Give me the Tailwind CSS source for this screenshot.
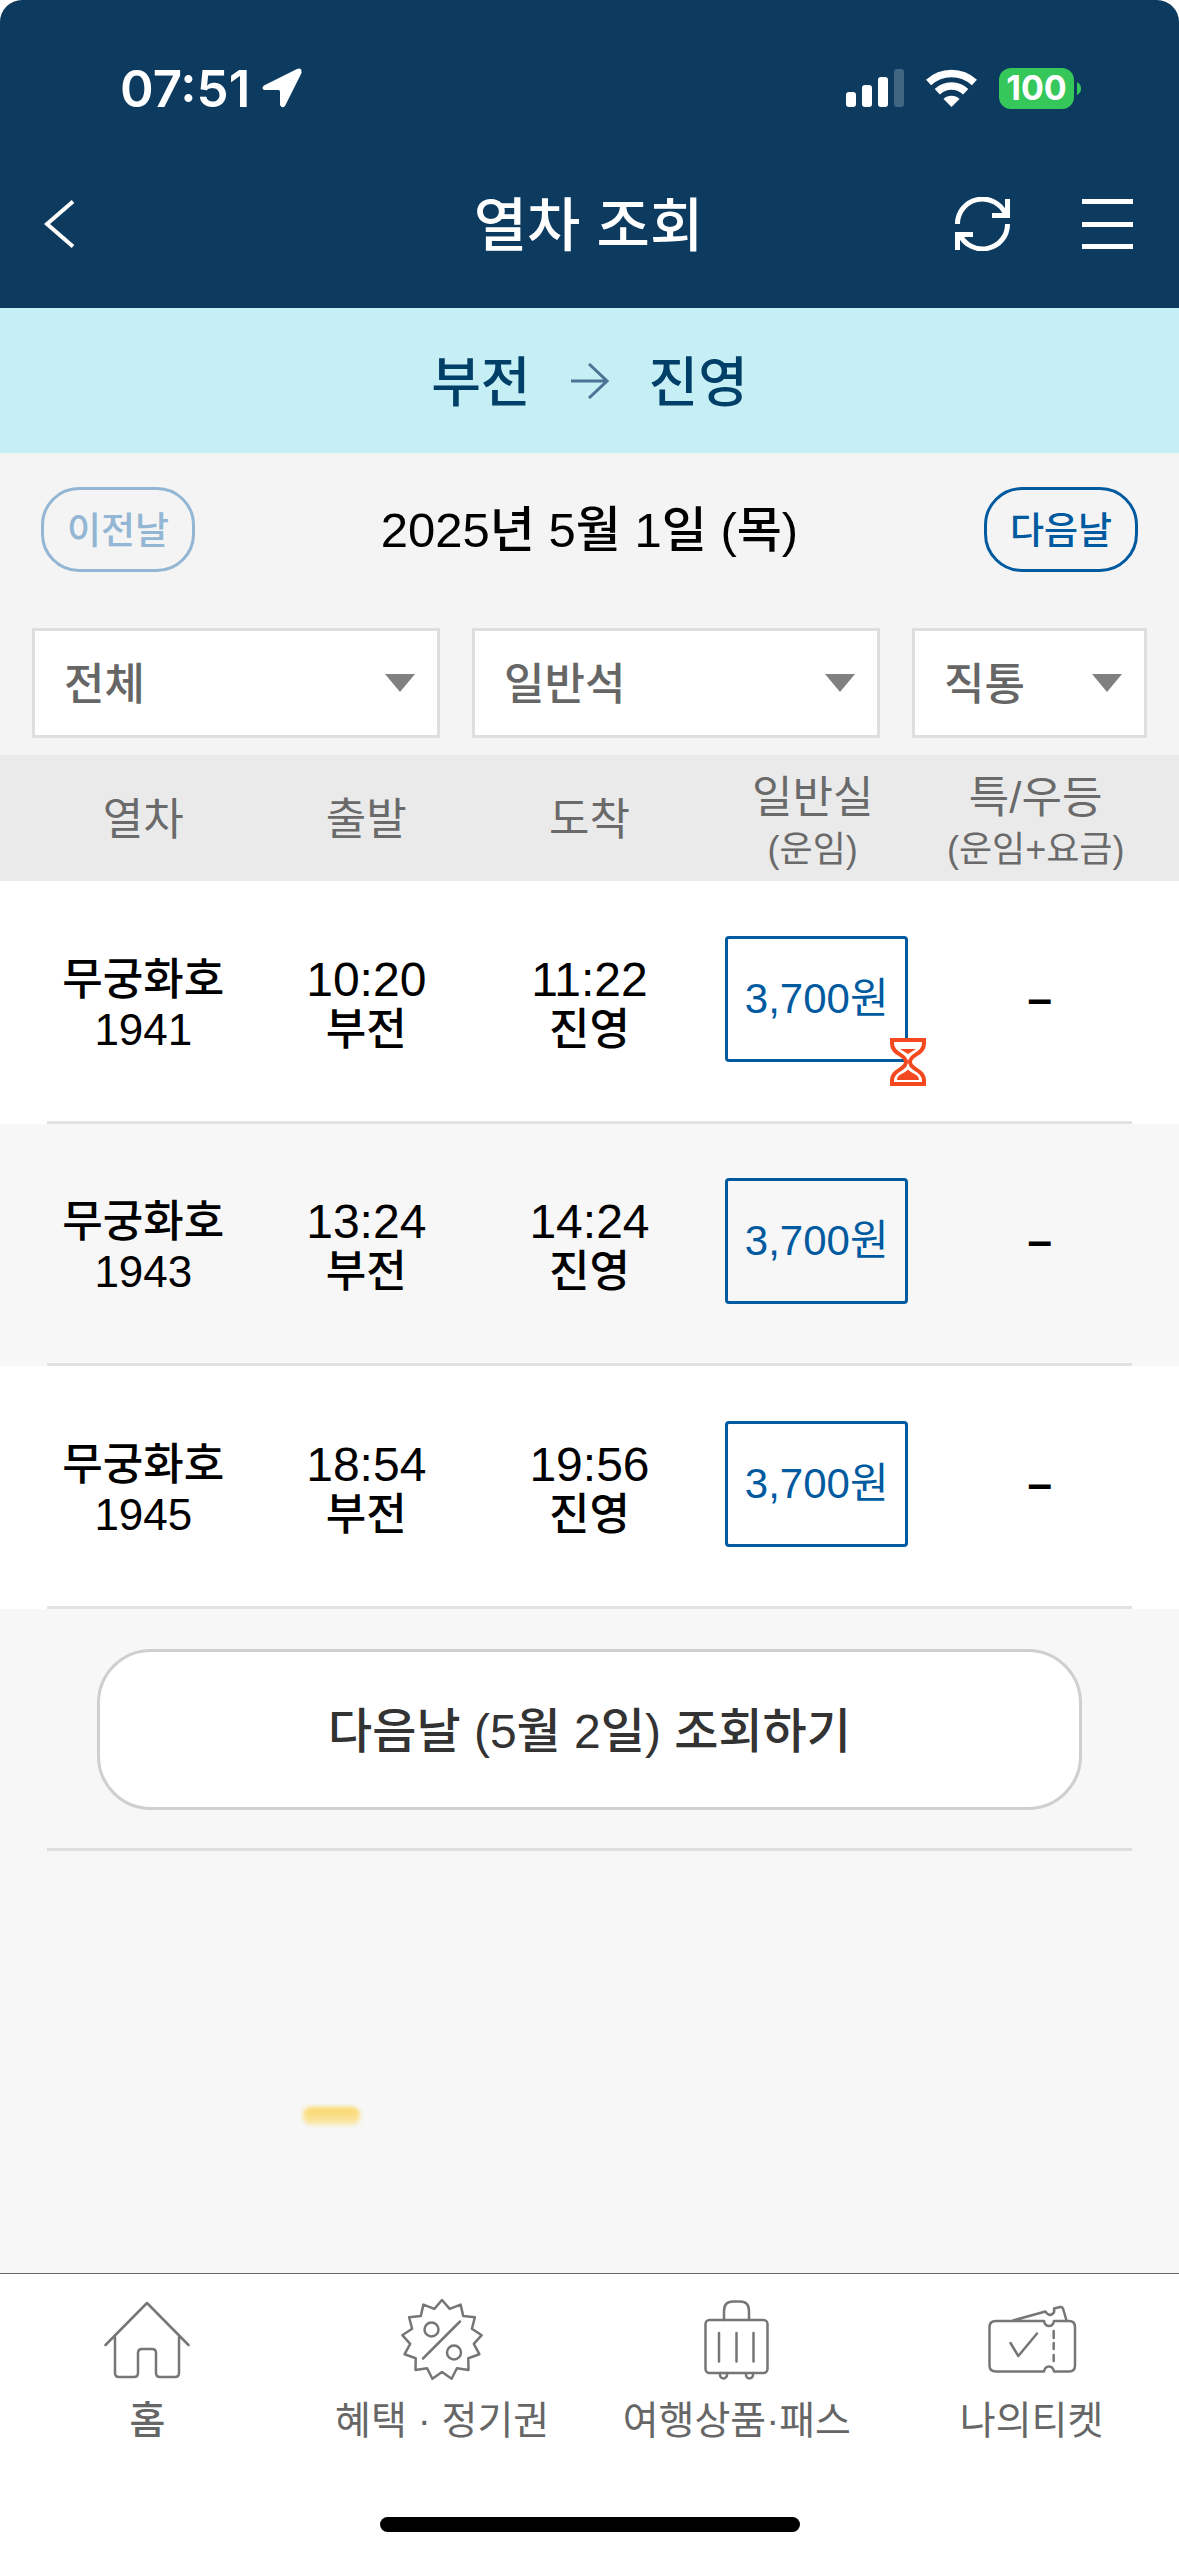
<!DOCTYPE html>
<html lang="ko">
<head>
<meta charset="utf-8">
<meta name="viewport" content="width=device-width, initial-scale=1">
<title>열차 조회</title>
<script src="https://cdn.jsdelivr.net/npm/@tailwindcss/browser@4"></script>
</head>
<body class="flex min-h-screen flex-col bg-white font-['Liberation_Sans','Noto_Sans_CJK_KR',sans-serif] text-black">

<header class="rounded-t-[22px] bg-[#0c3b5f] pb-9 text-white">
  <div class="flex h-44 items-center justify-between pl-[120px] pr-[98px]">
    <div class="flex items-center gap-3 font-['Inter',sans-serif] text-[51px] leading-none font-semibold">
      <span>07:51</span>
      <svg class="h-10 w-10" viewBox="0 0 40 40" fill="currentColor" aria-hidden="true"><path d="M35 1 2 17.500Q-1 20 2 22H16.500Q18 22 18 24V37Q20 41 23 38L39.500 5Q40-1 35 1Z"/></svg>
    </div>
    <div class="flex items-center">
      <svg class="h-[38px] w-[58px]" viewBox="0 0 58 38" fill="currentColor" aria-hidden="true"><rect y="23" width="10" height="15" rx="3"/><rect x="16" y="16" width="10" height="22" rx="3"/><rect x="32" y="8" width="10" height="30" rx="3"/><rect x="48" width="10" height="38" rx="3" opacity=".22"/></svg>
      <svg class="ml-[22px] h-[38px] w-[51px]" viewBox="0 0 51 38" fill="none" stroke="currentColor" stroke-width="7.500" aria-hidden="true"><path d="M2.600 13.500A33.500 33.500 0 0 1 48.400 13.500M11.300 22.800A20.500 20.500 0 0 1 39.700 22.800"/><path d="M25.500 38 17.500 30A11.500 11.500 0 0 1 33.500 30Z" fill="currentColor" stroke="none"/></svg>
      <div class="ml-[22px] flex h-[41px] w-[75px] items-center justify-center rounded-xl bg-[#35c759] font-['Inter',sans-serif] text-[34px] leading-none font-bold">100</div>
      <svg class="ml-[3px] h-[13px] w-1" viewBox="0 0 4 13" fill="#35c759" aria-hidden="true"><path d="M0 0Q4 2 4 6.500T0 13Z"/></svg>
    </div>
  </div>
  <div class="grid h-24 grid-cols-[1fr_auto_1fr] items-center pl-11 pr-[46px]">
    <button type="button" aria-label="뒤로"><svg class="h-12 w-[31px]" viewBox="0 0 31 48" fill="none" stroke="currentColor" stroke-width="4" aria-hidden="true"><path d="M29 1.500 3 24 29 46.500"/></svg></button>
    <h1 class="pt-1 text-[58px] leading-[64px] font-medium">열차 조회</h1>
    <div class="flex items-center justify-end gap-[72px]">
      <button type="button" aria-label="새로고침"><svg class="h-[54px] w-[55px]" viewBox="0 0 55 54" fill="none" stroke="currentColor" stroke-width="5" aria-hidden="true"><path d="M2.500 27A25 24.500 0 0 1 50.500 17M37 18.500H52.500V2M52.500 27A25 24.500 0 0 1 4.500 37M18 37.500H2.500V53"/></svg></button>
      <button type="button" aria-label="메뉴" class="flex h-[50px] w-[51px] flex-col justify-between"><span class="h-[5px] w-full bg-white"></span><span class="h-[5px] w-full bg-white"></span><span class="h-[5px] w-full bg-white"></span></button>
    </div>
  </div>
</header>

<main class="flex grow flex-col bg-[#f7f7f7]">
  <section class="flex h-[145px] items-center justify-center gap-10 bg-[#c6eff5] text-[54px] leading-[60px] font-medium text-[#003f68]" aria-label="구간">
    <span class="pt-1">부전</span>
    <svg class="h-9 w-[38px]" viewBox="0 0 38 36" fill="none" stroke="#4b7595" stroke-width="3" aria-hidden="true"><path d="M0 18H36M18 1 36 18 18 35"/></svg>
    <span class="pt-1">진영</span>
  </section>

  <section class="bg-[#f4f4f4] pt-[34px] pb-[17px]">
    <div class="flex items-center justify-between px-[41px]">
      <button type="button" class="h-[85px] w-[154px] rounded-[38px] border-3 border-[#92b6d3] pt-1 text-[37px] leading-[44px] font-medium text-[#92b6d3]">이전날</button>
      <h2 class="text-[49px] leading-[56px] font-medium">2025년 5월 1일 (목)</h2>
      <button type="button" class="h-[85px] w-[154px] rounded-[38px] border-3 border-[#005a9f] pt-1 text-[37px] leading-[44px] font-medium text-[#005a9f]">다음날</button>
    </div>
    <form class="mt-14 flex gap-8 px-8 text-[44px] leading-[56px] font-medium text-[#666]">
      <label class="relative flex-[408]">
        <select aria-label="열차 종류" class="h-[110px] w-full appearance-none border-3 border-[#dedede] bg-white pt-1 pl-[29px]"><option>전체</option></select>
        <svg class="pointer-events-none absolute top-[46px] right-[25px] h-[18px] w-[30px]" viewBox="0 0 30 18" fill="#808080" aria-hidden="true"><path d="M0 0H30L15 18Z"/></svg>
      </label>
      <label class="relative flex-[408]">
        <select aria-label="좌석" class="h-[110px] w-full appearance-none border-3 border-[#dedede] bg-white pt-1 pl-[29px]"><option>일반석</option></select>
        <svg class="pointer-events-none absolute top-[46px] right-[25px] h-[18px] w-[30px]" viewBox="0 0 30 18" fill="#808080" aria-hidden="true"><path d="M0 0H30L15 18Z"/></svg>
      </label>
      <label class="relative flex-[235]">
        <select aria-label="여정" class="h-[110px] w-full appearance-none border-3 border-[#dedede] bg-white pt-1 pl-[29px]"><option>직통</option></select>
        <svg class="pointer-events-none absolute top-[46px] right-[25px] h-[18px] w-[30px]" viewBox="0 0 30 18" fill="#808080" aria-hidden="true"><path d="M0 0H30L15 18Z"/></svg>
      </label>
    </form>
  </section>

  <table class="w-full table-fixed text-center">
    <colgroup><col class="w-[21.6%]"><col><col><col><col class="w-[21.6%]"></colgroup>
    <thead>
      <tr class="h-[126px] bg-[#eaeaea] text-[44px] leading-[52px] text-[#6a6a6a]">
        <th scope="col" class="pt-1 pl-8 font-normal">열차</th>
        <th scope="col" class="pt-1 font-normal">출발</th>
        <th scope="col" class="pt-1 font-normal">도착</th>
        <th scope="col" class="pt-3 font-normal">일반실<span class="block text-[36px]">(운임)</span></th>
        <th scope="col" class="pt-3 pr-8 font-normal">특/우등<span class="block text-[36px]">(운임+요금)</span></th>
      </tr>
    </thead>
    <tbody class="text-[44px] leading-[50px] font-medium">
      <tr class="relative h-[243px] bg-white">
        <td class="pt-1 pl-8 after:absolute after:inset-x-[47px] after:bottom-0 after:h-[3px] after:bg-[#e2e2e2]">무궁화호<br>1941</td>
        <td class="pt-1"><time class="block text-[48px]">10:20</time>부전</td>
        <td class="pt-1"><time class="block text-[48px]">11:22</time>진영</td>
        <td class="pb-2 pl-2"><button type="button" class="relative h-[126px] w-[183px] rounded-[4px] border-3 border-[#005a9f] text-[42px] leading-[50px] font-normal text-[#005a9f]">3,700원
          <svg class="absolute -right-[21px] -bottom-[27px] h-12 w-9" viewBox="0 0 36 48" fill="none" stroke="#f4481e" stroke-width="4" aria-hidden="true"><path d="M2 2H34V5C34 17 20 16 20 24S34 31 34 43V46H2V43C2 31 16 32 16 24S2 17 2 5Z" fill="#fff"/><path d="M10 11H26L18 16ZM7 42C7 36 14 36 18 31.500C22 36 29 36 29 42Z" fill="#f4481e" stroke="none"/></svg></button></td>
        <td class="pr-6 pb-2 font-bold">–</td>
      </tr>
      <tr class="relative h-[242px] bg-[#f7f7f7]">
        <td class="pt-1 pl-8 after:absolute after:inset-x-[47px] after:bottom-0 after:h-[3px] after:bg-[#e2e2e2]">무궁화호<br>1943</td>
        <td class="pt-1"><time class="block text-[48px]">13:24</time>부전</td>
        <td class="pt-1"><time class="block text-[48px]">14:24</time>진영</td>
        <td class="pb-2 pl-2"><button type="button" class="h-[126px] w-[183px] rounded-[4px] border-3 border-[#005a9f] text-[42px] leading-[50px] font-normal text-[#005a9f]">3,700원</button></td>
        <td class="pr-6 pb-2 font-bold">–</td>
      </tr>
      <tr class="relative h-[243px] bg-white">
        <td class="pt-1 pl-8 after:absolute after:inset-x-[47px] after:bottom-0 after:h-[3px] after:bg-[#e2e2e2]">무궁화호<br>1945</td>
        <td class="pt-1"><time class="block text-[48px]">18:54</time>부전</td>
        <td class="pt-1"><time class="block text-[48px]">19:56</time>진영</td>
        <td class="pb-2 pl-2"><button type="button" class="h-[126px] w-[183px] rounded-[4px] border-3 border-[#005a9f] text-[42px] leading-[50px] font-normal text-[#005a9f]">3,700원</button></td>
        <td class="pr-6 pb-2 font-bold">–</td>
      </tr>
    </tbody>
  </table>

  <div class="mx-[47px] border-b-3 border-[#dedede] px-[50px] pt-10 pb-[38px]">
    <button type="button" class="h-[161px] w-full rounded-[54px] border-3 border-[#cfcfcf] bg-white pt-1 text-[48px] leading-[56px] font-medium text-[#333]">다음날 (5월 2일) 조회하기</button>
  </div>
  <div class="mt-64 ml-[303px] h-[18px] w-[57px] rounded-lg bg-linear-to-b from-[#fbd65f] to-[#fae9b0] blur-[2px]"></div>
</main>

<nav class="border-t border-[#666] bg-white pt-[25px] pb-6 text-[#666]" aria-label="주 메뉴">
  <div class="grid grid-cols-4 text-[39px] leading-[48px]">
    <a href="#home" class="flex flex-col items-center gap-4 font-medium">
      <span class="flex h-[82px] items-center"><svg class="h-[78px] w-[86px]" viewBox="0 0 86 78" fill="none" stroke="#767676" stroke-width="2.500" stroke-linecap="round" stroke-linejoin="round" aria-hidden="true"><path d="M1.500 44 43 2 84.500 44M11 36V72Q11 76 15 76H30Q34 76 34 72V52Q34 48 38 48H48Q52 48 52 52V72Q52 76 56 76H71Q75 76 75 72V36"/></svg></span>
      홈</a>
    <a href="#benefits" class="flex flex-col items-center gap-4">
      <span class="flex h-[82px] items-center"><svg class="h-[84px] w-[84px]" viewBox="0 0 84 84" fill="none" stroke="#767676" stroke-width="2.500" stroke-linecap="round" stroke-linejoin="round" aria-hidden="true"><path d="M42 2 49.700 10.900 60.600 6.600 63.200 18 74.900 19.300 71.900 30.700 81.700 37.200 73.800 45.900 79.400 56.200 68.300 60.200 68.500 71.900 56.900 70.300 51.600 80.800 42 74 32.400 80.800 27.100 70.300 15.500 71.900 15.700 60.200 4.600 56.200 10.200 45.900 2.300 37.200 12.100 30.700 9.100 19.300 20.800 18 23.400 6.600 34.300 10.900ZM23 60.500 60 23.500"/><circle cx="31.500" cy="31.500" r="7"/><circle cx="54" cy="54.500" r="7"/></svg></span>
      혜택 · 정기권</a>
    <a href="#travel" class="flex flex-col items-center gap-4">
      <span class="flex h-[82px] items-center"><svg class="h-20 w-[67px]" viewBox="0 0 67 80" fill="none" stroke="#767676" stroke-width="2.500" stroke-linecap="round" aria-hidden="true"><rect x="2.500" y="20" width="62" height="53" rx="4"/><path d="M21 20V11Q21 1.500 30 1.500H37Q46 1.500 46 11V20M16 33V61.500M33.500 33V61.500M50.500 33V61.500M17 73V75A3.500 3.500 0 0 0 24 75V73M43 73V75A3.500 3.500 0 0 0 50 75V73"/></svg></span>
      여행상품·패스</a>
    <a href="#tickets" class="flex flex-col items-center gap-4">
      <span class="flex h-[82px] items-center"><svg class="h-[70px] w-[90px]" viewBox="0 0 90 70" fill="none" stroke="#767676" stroke-width="2.500" stroke-linecap="round" stroke-linejoin="round" aria-hidden="true"><path d="M9 16H57Q58 21 62 21T67 16H82Q88 16 88 22V60.500Q88 66.500 82 66.500H67Q66 61.500 62 61.500T57 66.500H9Q2.500 66.500 2.500 60.500V22Q2.500 16 9 16ZM26 15.500 58.500 6.500Q61 11 64.500 9.500T67 3.500L73 2Q75 1.500 76 3.500L79.500 15.500M66.700 26V33M66.700 38V44M66.700 50V56M23.500 38 31.300 51 50 28.500"/></svg></span>
      나의티켓</a>
  </div>
  <div class="mx-auto mt-[72px] h-[15px] w-[420px] rounded-full bg-black"></div>
</nav>
</body>
</html>
